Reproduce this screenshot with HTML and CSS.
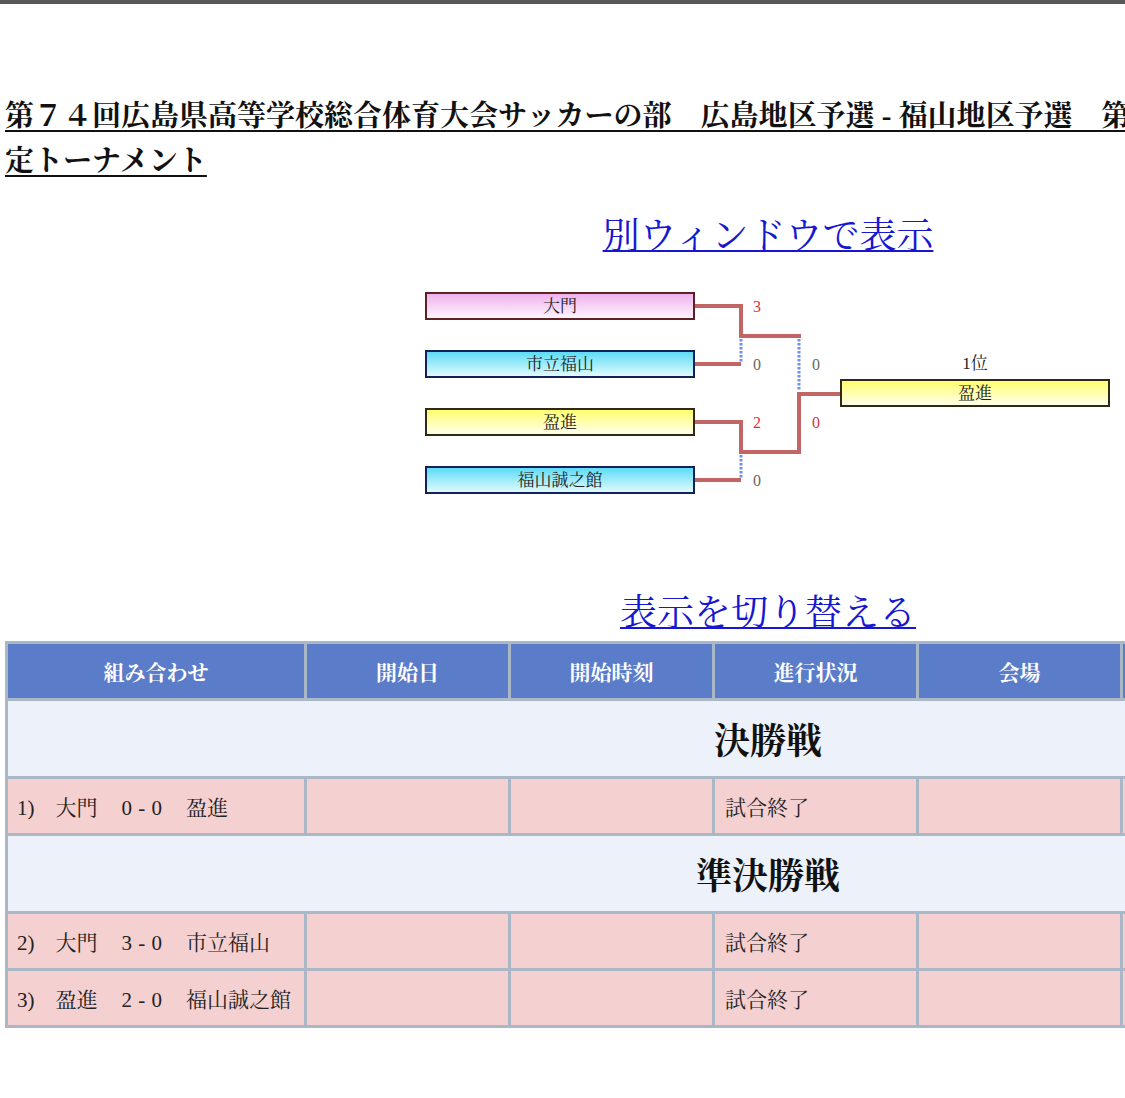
FILE: index.html
```
<!DOCTYPE html>
<html lang="ja">
<head>
    <meta charset="UTF-8">
    <meta name="viewport" content="width=device-width, initial-scale=1.0">
    <title>トーナメント表</title>
    <link rel="stylesheet" href="styles.css">
</head>
<body>
    <div class="page">
        <h1 class="title">第７４回広島県高等学校総合体育大会サッカーの部　広島地区予選 - 福山地区予選　第１代表決定トーナメント</h1>

        <p class="link-line"><a href="#">別ウィンドウで表示</a></p>

        <!-- トーナメント表 -->
        <svg class="bracket" width="694" height="220" viewBox="0 0 694 220">
            <defs>
                <linearGradient id="g-pink" x1="0" y1="0" x2="0" y2="1">
                    <stop offset="0" stop-color="#eeb0ec"/>
                    <stop offset="1" stop-color="#fff6ff"/>
                </linearGradient>
                <linearGradient id="g-cyan" x1="0" y1="0" x2="0" y2="1">
                    <stop offset="0" stop-color="#58daf4"/>
                    <stop offset="1" stop-color="#e6fcff"/>
                </linearGradient>
                <linearGradient id="g-yellow" x1="0" y1="0" x2="0" y2="1">
                    <stop offset="0" stop-color="#ffff6a"/>
                    <stop offset="1" stop-color="#fffef0"/>
                </linearGradient>
            </defs>

            <!-- 勝ち上がり線 -->
            <path class="win" d="M274 21 H320 V51 H380"/>
            <path class="win" d="M274 79 H320"/>
            <path class="win" d="M274 137 H320 V167 H378 V109 H420"/>
            <path class="win" d="M274 195 H320"/>
            <path class="lose" d="M320 54 V78"/>
            <path class="lose" d="M320 170 V194"/>
            <path class="lose" d="M378 54 V106"/>

            <!-- チーム -->
            <rect class="team" x="5" y="8" width="268" height="26" fill="url(#g-pink)" stroke="#5e2222"/>
            <text class="name" x="139" y="27">大門</text>
            <rect class="team" x="5" y="66" width="268" height="26" fill="url(#g-cyan)" stroke="#14205c"/>
            <text class="name" x="139" y="85">市立福山</text>
            <rect class="team" x="5" y="124" width="268" height="26" fill="url(#g-yellow)" stroke="#2e2a14"/>
            <text class="name" x="139" y="143">盈進</text>
            <rect class="team" x="5" y="182" width="268" height="26" fill="url(#g-cyan)" stroke="#14205c"/>
            <text class="name" x="139" y="201">福山誠之館</text>

            <rect class="team" x="420" y="95" width="268" height="26" fill="url(#g-yellow)" stroke="#2e2a14"/>
            <text class="name" x="554" y="114">盈進</text>
            <text class="name" x="554" y="84">1位</text>

            <!-- スコア -->
            <text class="score won" x="332" y="27">3</text>
            <text class="score" x="332" y="85">0</text>
            <text class="score won" x="332" y="143">2</text>
            <text class="score" x="332" y="201">0</text>
            <text class="score" x="391" y="85">0</text>
            <text class="score won" x="391" y="143">0</text>
        </svg>

        <p class="link-line switch"><a href="#">表示を切り替える</a></p>

        <table class="games">
            <colgroup>
                <col class="c-match">
                <col><col><col><col><col><col>
            </colgroup>
            <thead>
                <tr>
                    <th>組み合わせ</th>
                    <th>開始日</th>
                    <th>開始時刻</th>
                    <th>進行状況</th>
                    <th>会場</th>
                    <th>試合結果</th>
                    <th>備考</th>
                </tr>
            </thead>
            <tbody>
                <tr class="round">
                    <td colspan="7">決勝戦</td>
                </tr>
                <tr class="game">
                    <td>1)　大門　<span class="result">0 - 0</span>　盈進</td>
                    <td></td>
                    <td></td>
                    <td>試合終了</td>
                    <td></td>
                    <td></td>
                    <td></td>
                </tr>
                <tr class="round">
                    <td colspan="7">準決勝戦</td>
                </tr>
                <tr class="game">
                    <td>2)　大門　<span class="result">3 - 0</span>　市立福山</td>
                    <td></td>
                    <td></td>
                    <td>試合終了</td>
                    <td></td>
                    <td></td>
                    <td></td>
                </tr>
                <tr class="game">
                    <td>3)　盈進　<span class="result">2 - 0</span>　福山誠之館</td>
                    <td></td>
                    <td></td>
                    <td>試合終了</td>
                    <td></td>
                    <td></td>
                    <td></td>
                </tr>
            </tbody>
        </table>
    </div>
</body>
</html>
```

FILE: styles.css
```
html {
    overflow-x: hidden;
}

body {
    margin: 0;
    border-top: 4px solid #58585a;
    font-family: "Liberation Serif", "Noto Serif CJK JP", "Noto Sans CJK JP", serif;
    color: #222;
}

.page {
    width: 1526px;
    padding-left: 5px;
}

.title {
    width: 1265px;
    margin: 90px 0 0;
    font-size: 29px;
    line-height: 45px;
    font-weight: bold;
    color: #111;
    text-decoration: underline;
    text-underline-offset: 4px;
}

.link-line {
    margin: 28px 0 0;
    text-align: center;
    font-size: 37px;
    line-height: 50px;
}

.link-line a {
    color: #1717d2;
    text-decoration: underline;
    text-decoration-thickness: 2px;
}

.link-line.switch {
    margin-top: 84px;
}

.bracket {
    display: block;
    margin: 23px auto 0;
}

.bracket .win {
    fill: none;
    stroke: #c26565;
    stroke-width: 4;
}

.bracket .lose {
    fill: none;
    stroke: #6f8ff0;
    stroke-width: 3;
    stroke-dasharray: 2.5 1.5;
}

.bracket .team {
    stroke-width: 2;
}

.bracket .name {
    font-size: 17px;
    fill: #222;
    text-anchor: middle;
}

.bracket .score {
    font-size: 16px;
    fill: #666;
}

.bracket .score.won {
    fill: #d23535;
}

.games {
    margin-top: 2px;
    width: 1526px;
    table-layout: fixed;
    border-collapse: separate;
    border-spacing: 3px;
    background-color: #a9b7c6;
}

.games col {
    width: 201px;
}

.games col.c-match {
    width: 296px;
}

.games th {
    height: 54px;
    padding: 0;
    background-color: #5a7cc9;
    color: white;
    font-size: 21px;
    font-weight: bold;
}

.games td {
    padding: 0 10px;
    font-size: 21px;
}

.games .round td {
    height: 75px;
    background-color: #edf1fa;
    text-align: center;
    font-size: 36px;
    font-weight: bold;
    color: #111;
}

.games .game td {
    height: 54px;
    background-color: #f5d0d0;
}

.games .game td:first-child {
    padding-left: 9px;
}

.games .result {
    padding: 0 3px;
    word-spacing: 1px;
}
```
